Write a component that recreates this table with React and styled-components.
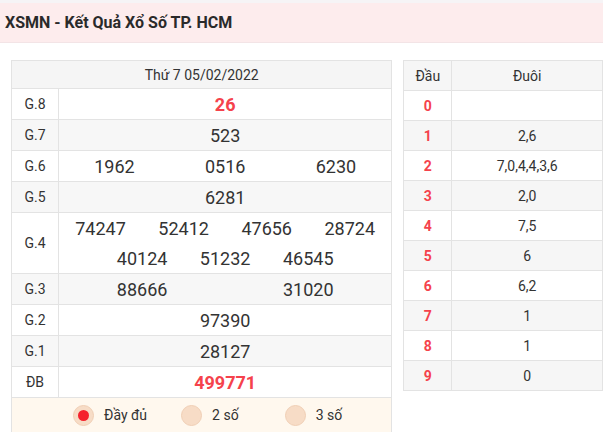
import React from "react";
import styled, { createGlobalStyle } from "styled-components";

const Global = createGlobalStyle`
  html, body { margin: 0; padding: 0; background: #fff; }
  body { font-family: Roboto, "Noto Sans", Arial, sans-serif; color: #333; }
  * { box-sizing: border-box; }
`;

const Page = styled.div`
  width: 603px;
  height: 433px;
  overflow: hidden;
  background: #f6f4f6;
  padding-top: 3px;
`;

const Title = styled.h1`
  margin: 0;
  height: 40px;
  display: flex;
  align-items: center;
  padding-left: 5px;
  background: #fdeced;
  border-bottom: 1px solid #f3e4e6;
  font-size: 16px;
  font-weight: 700;
  color: #2a2a2a;
`;

const Content = styled.div`
  background: #fff;
  display: flex;
  gap: 11px;
  padding: 17px 0 0 11px;
  height: 390px;
  align-items: flex-start;
`;

const Results = styled.div`
  width: 382px;
  border: 1px solid #e3e3e3;
  border-bottom: none;
`;

const DateHead = styled.div`
  height: 28px;
  display: flex;
  align-items: center;
  justify-content: center;
  background: #f5f5f5;
  font-size: 14px;
  color: #333;
  border-bottom: 1px solid #e3e3e3;
`;

const PrizeRow = styled.div`
  display: flex;
  background: ${(p) => (p.$alt ? "#f7f7f7" : "#fff")};
  border-bottom: 1px solid #e3e3e3;
`;

const Label = styled.div`
  width: 47px;
  flex: none;
  display: flex;
  align-items: center;
  justify-content: center;
  border-right: 1px solid #e3e3e3;
  font-size: 14px;
  color: #333;
`;

const Numbers = styled.div`
  flex: 1;
  display: flex;
  flex-direction: column;
`;

const Line = styled.div`
  height: 30px;
  display: flex;
  align-items: center;
  justify-content: center;
`;

const Num = styled.span`
  width: ${(p) => p.$w};
  text-align: center;
  font-size: 18px;
  font-weight: ${(p) => (p.$hot ? 700 : 400)};
  color: ${(p) => (p.$hot ? "#f5424c" : "#333")};
`;

const Footer = styled.div`
  height: 34px;
  background: #fff8ee;
  display: flex;
  align-items: center;
  padding-left: 61px;
`;

const Option = styled.label`
  display: flex;
  align-items: center;
  gap: 10px;
  font-size: 14px;
  color: #333;
  margin-right: ${(p) => p.$mr}px;
`;

const Radio = styled.span`
  width: 21px;
  height: 21px;
  border-radius: 50%;
  background: #f7dcc6;
  border: 1px solid #f0cfb5;
  display: flex;
  align-items: center;
  justify-content: center;
  &::after {
    content: "";
    display: ${(p) => (p.$on ? "block" : "none")};
    width: 11px;
    height: 11px;
    border-radius: 50%;
    background: #f5222d;
  }
`;

const Loto = styled.div`
  width: 200px;
  border: 1px solid #e3e3e3;
  border-bottom: none;
`;

const LotoRow = styled.div`
  display: flex;
  height: 30px;
  background: ${(p) => (p.$alt ? "#f6f6f6" : "#fff")};
  border-bottom: 1px solid #e3e3e3;
`;

const Head = styled.div`
  width: 48px;
  flex: none;
  display: flex;
  align-items: center;
  justify-content: center;
  border-right: 1px solid #e3e3e3;
  font-size: 14px;
  font-weight: ${(p) => (p.$bold ? 700 : 400)};
  color: ${(p) => (p.$bold ? "#f5424c" : "#333")};
`;

const Tail = styled.div`
  flex: 1;
  display: flex;
  align-items: center;
  justify-content: center;
  font-size: 14px;
  color: #333;
`;

const prizes = [
  { l: "G.8", lines: [["26"]], hot: true },
  { l: "G.7", lines: [["523"]] },
  { l: "G.6", lines: [["1962", "0516", "6230"]] },
  { l: "G.5", lines: [["6281"]] },
  { l: "G.4", lines: [["74247", "52412", "47656", "28724"], ["40124", "51232", "46545"]], w: "25%" },
  { l: "G.3", lines: [["88666", "31020"]] },
  { l: "G.2", lines: [["97390"]] },
  { l: "G.1", lines: [["28127"]] },
  { l: "ĐB", lines: [["499771"]], hot: true },
];

const loto = ["", "2,6", "7,0,4,4,3,6", "2,0", "7,5", "6", "6,2", "1", "1", "0"];

export default function App() {
  return (
    <Page>
      <Global />
      <Title>XSMN - Kết Quả Xổ Số TP. HCM</Title>
      <Content>
        <Results>
          <DateHead>Thứ 7 05/02/2022</DateHead>
          {prizes.map((p, i) => (
            <PrizeRow key={p.l} $alt={i % 2 === 1}>
              <Label>{p.l}</Label>
              <Numbers>
                {p.lines.map((ln, j) => (
                  <Line key={j}>
                    {ln.map((n) => (
                      <Num key={n} $hot={p.hot} $w={p.w || `${100 / ln.length}%`}>
                        {n}
                      </Num>
                    ))}
                  </Line>
                ))}
              </Numbers>
            </PrizeRow>
          ))}
          <Footer>
            <Option $mr={34}>
              <Radio $on />
              Đầy đủ
            </Option>
            <Option $mr={46}>
              <Radio />
              2 số
            </Option>
            <Option $mr={0}>
              <Radio />
              3 số
            </Option>
          </Footer>
        </Results>
        <Loto>
          <LotoRow $alt>
            <Head>Đầu</Head>
            <Tail>Đuôi</Tail>
          </LotoRow>
          {loto.map((t, i) => (
            <LotoRow key={i} $alt={i % 2 === 1}>
              <Head $bold>{i}</Head>
              <Tail>{t}</Tail>
            </LotoRow>
          ))}
        </Loto>
      </Content>
    </Page>
  );
}
